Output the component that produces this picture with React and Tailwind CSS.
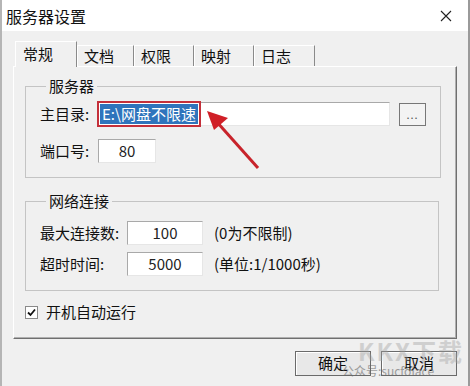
import React from 'react';

const FONT = { fontFamily: '"Noto Sans CJK SC", "Noto Sans", "Liberation Sans", sans-serif' };

function Tab({ label, active, width }) {
  if (active) {
    return (
      <div
        className="relative z-10 -mb-px flex h-[26px] items-start border-l border-t border-r border-l-white border-t-white border-r-[#8a8a8a] bg-[#f0f0f0] pl-[7px] pt-[1px] text-[15px] text-[#111]"
        style={{ width }}
      >
        {label}
      </div>
    );
  }
  return (
    <div
      className="flex h-[21px] items-start border-l border-t border-r border-l-white border-t-white border-r-[#8a8a8a] bg-[#f0f0f0] pl-[6px] text-[15px] leading-[20px] text-[#111]"
      style={{ width }}
    >
      {label}
    </div>
  );
}

function TextBox({ value, className = '' }) {
  return (
    <div
      className={`flex h-[24px] items-center justify-center border border-t-[#a9a9a9] border-l-[#a9a9a9] border-b-[#e6e6e6] border-r-[#e6e6e6] bg-white text-[15px] text-[#222] ${className}`}
    >
      {value}
    </div>
  );
}

function Group({ title, children, className = '' }) {
  return (
    <fieldset className={`border border-[#c4c4c4] px-[14px] ${className}`}>
      <legend className="ml-[6px] px-[3px] text-[15px] leading-[20px] text-[#111]">{title}</legend>
      {children}
    </fieldset>
  );
}

function Arrow() {
  return (
    <svg className="pointer-events-none absolute left-0 top-0" width="470" height="386">
      <line x1="256" y1="168" x2="214" y2="121" stroke="#c8232b" strokeWidth="3" />
      <polygon points="205,111 226,118 212,130" fill="#d01f27" />
    </svg>
  );
}

export default function App() {
  return (
    <div
      className="relative h-[386px] w-[470px] overflow-hidden border-l-2 border-r-2 border-l-[#b5b5b5] border-r-[#9a9a9a] bg-[#f0f0f0]"
      style={FONT}
    >
      {/* title bar */}
      <div className="flex h-[31px] items-center justify-between bg-white pl-[4px] pr-[16px]">
        <span className="text-[16px] text-[#111]">服务器设置</span>
        <svg width="12" height="12" viewBox="0 0 12 12">
          <path d="M1 1 L11 11 M11 1 L1 11" stroke="#222" strokeWidth="1.1" />
        </svg>
      </div>

      <div className="pl-[11px] pt-[10px]">
        {/* tabs */}
        <div className="flex h-[25px] items-end pl-[2px]">
          <Tab label="常规" active width={62} />
          <Tab label="文档" width={57} />
          <Tab label="权限" width={60} />
          <Tab label="映射" width={60} />
          <Tab label="日志" width={61} />
        </div>

        {/* tab panel */}
        <div className="h-[273px] w-[444px] border border-l-white border-t-white border-r-[#6f6f6f] border-b-[#6f6f6f] px-[11px] pt-[9px] shadow-[inset_-1px_-1px_0_#b0b0b0]">
          <Group title="服务器" className="h-[102px] w-[414px]">
            <div className="mt-[6px] flex items-center">
              <span className="w-[58px] text-[15px] text-[#111]">主目录:</span>
              <div className="flex h-[24px] w-[292px] items-center border border-t-[#a9a9a9] border-l-[#a9a9a9] border-b-[#e6e6e6] border-r-[#e6e6e6] bg-white">
                <span className="relative ml-px bg-[#2f74bc] px-[2px] text-[15px] leading-[20px] text-white">
                  E:\网盘不限速
                  <span className="absolute -left-[3px] -right-[3px] -top-[3px] -bottom-[3px] border-2 border-[#c4303a]" />
                </span>
              </div>
              <div className="ml-[9px] flex h-[23px] w-[27px] items-center justify-center border border-[#777] bg-[#f3f3f3] text-[11px] tracking-[1px] text-[#555]">
                ...
              </div>
            </div>
            <div className="mt-[13px] flex items-center">
              <span className="w-[58px] text-[15px] text-[#111]">端口号:</span>
              <TextBox value="80" className="w-[58px]" />
            </div>
          </Group>

          <Group title="网络连接" className="mt-[13px] h-[100px] w-[414px]">
            <div className="mt-[10px] flex items-center">
              <span className="w-[87px] text-[15px] text-[#111]">最大连接数:</span>
              <TextBox value="100" className="w-[76px]" />
              <span className="ml-[11px] text-[15px] text-[#111]">(0为不限制)</span>
            </div>
            <div className="mt-[7px] flex items-center">
              <span className="w-[87px] text-[15px] text-[#111]">超时时间:</span>
              <TextBox value="5000" className="w-[76px]" />
              <span className="ml-[11px] text-[15px] text-[#111]">(单位:1/1000秒)</span>
            </div>
          </Group>

          <div className="mt-[10px] flex items-center">
            <div className="flex h-[13px] w-[13px] items-center justify-center border border-[#8a8a8a] bg-white">
              <svg width="9" height="9" viewBox="0 0 9 9">
                <path d="M1 4.5 L3.5 7 L8 1.5" stroke="#111" strokeWidth="1.8" fill="none" />
              </svg>
            </div>
            <span className="ml-[8px] text-[15px] text-[#111]">开机自动运行</span>
          </div>
        </div>

        {/* buttons */}
        <div className="mt-[12px] flex w-[444px] justify-end gap-[10px]">
          <div className="flex h-[25px] w-[76px] items-center justify-center border border-[#6a6a6a] bg-[#e8e8e8] text-[15px] text-[#111] shadow-[inset_1px_1px_0_#fff]">
            确定
          </div>
          <div className="flex h-[25px] w-[76px] items-center justify-center border border-[#6a6a6a] bg-[#e8e8e8] text-[15px] text-[#111] shadow-[inset_1px_1px_0_#fff]">
            取消
          </div>
        </div>
      </div>

      <Arrow />

      {/* watermark */}
      <div className="pointer-events-none absolute left-[356px] top-[338px] whitespace-nowrap text-[24px] font-bold leading-[26px] tracking-[2px] text-[#a0a0a0] opacity-40">
        KKX下载
      </div>
      <div className="pointer-events-none absolute left-[340px] top-[364px] whitespace-nowrap text-[12px] leading-[14px] text-[#666] opacity-60">
        公众号:sucfolace
      </div>
    </div>
  );
}
